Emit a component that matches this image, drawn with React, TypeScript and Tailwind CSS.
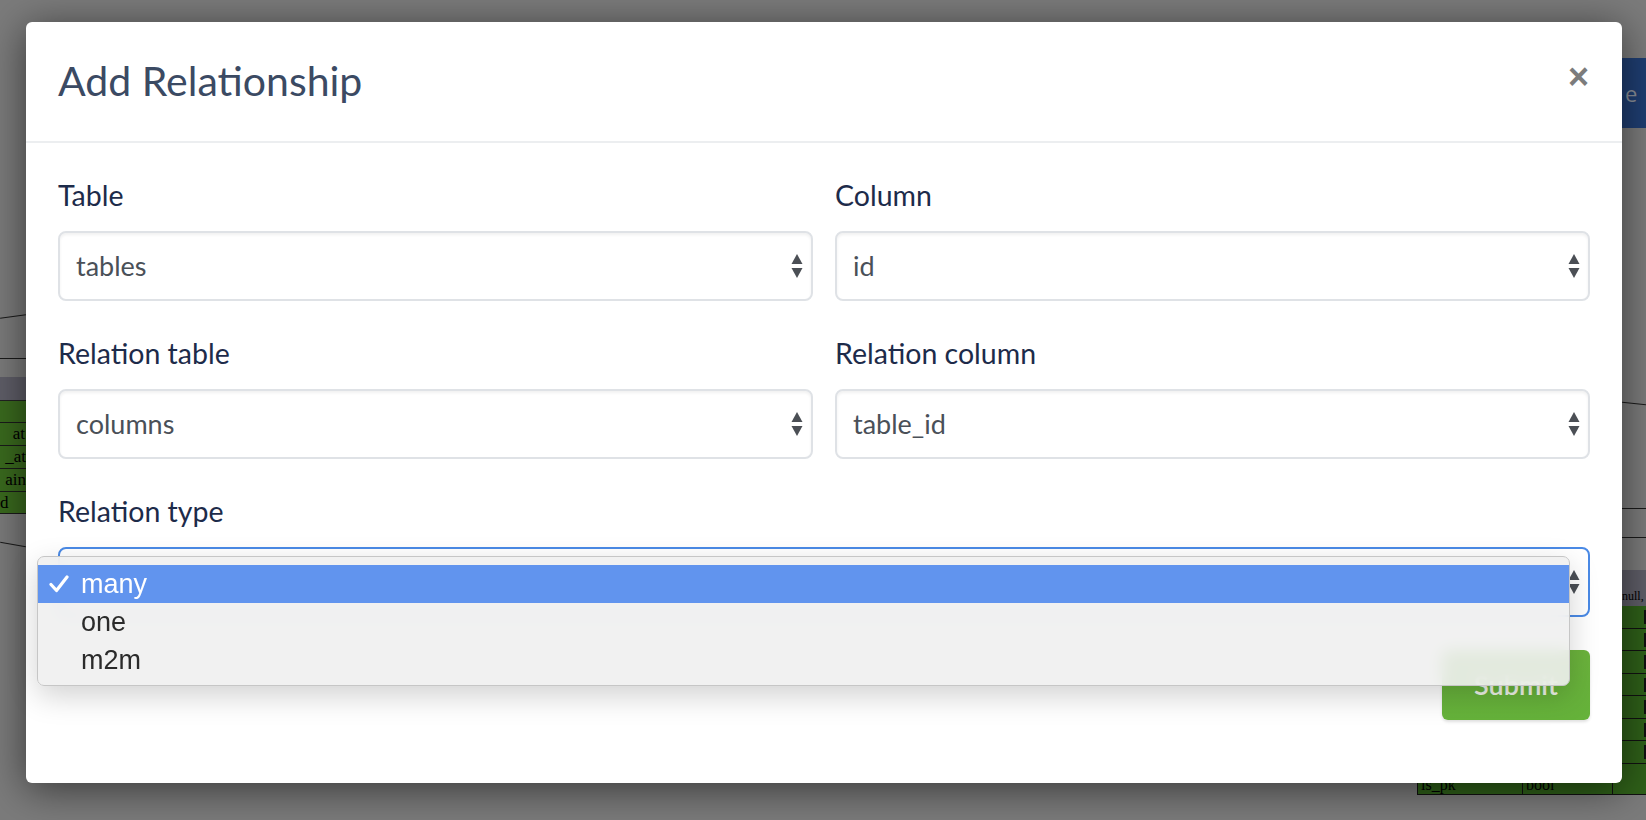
import React from "react";

const sans = "font-['Lato','Noto_Sans',sans-serif]";

function Arrows() {
  return (
    <svg width="12" height="26" viewBox="0 0 12 26" className="shrink-0">
      <path d="M6 1 L11.5 11 L0.5 11 Z" fill="#4b4f55" />
      <path d="M6 25 L11.5 15 L0.5 15 Z" fill="#4b4f55" />
    </svg>
  );
}

function SelectBox({ value, focused }: { value?: string; focused?: boolean }) {
  return (
    <div
      className={
        focused
          ? "h-[70px] rounded-[8px] border-2 border-[#4a8ae6] bg-white flex items-center justify-between pl-[16px] pr-[8px]"
          : "h-[70px] rounded-[8px] border-2 border-[#dfe2e6] bg-white shadow-[inset_0_2px_3px_rgba(0,0,0,0.06)] flex items-center justify-between pl-[16px] pr-[8px]"
      }
    >
      <span className="text-[27px] text-[#4a5058]">{value}</span>
      <Arrows />
    </div>
  );
}

function Field({ label, value, focused }: { label: string; value?: string; focused?: boolean }) {
  return (
    <div className="flex flex-col">
      <label className="text-[28.5px] leading-[32px] text-[#1d2b4a] mb-[20px]">{label}</label>
      <SelectBox value={value} focused={focused} />
    </div>
  );
}

function Background() {
  return (
    <>
      {/* left diagram fragment */}
      <div className="absolute left-0 top-[316px] w-[26px] h-[1px] bg-[#1a1a1a] -rotate-[8deg]" />
      <div className="absolute left-0 top-[358px] w-[26px] h-[1px] bg-[#1a1a1a]" />
      <div className="absolute left-0 top-[377px] w-[26px] h-[24px] bg-[#5f5e68] border-b border-[#222]" />
      <div className="absolute left-0 top-[401px] w-[26px] h-[113px] overflow-hidden flex flex-col bg-[#3a6a1e] font-['Liberation_Serif',serif] text-[17px] text-black leading-[22px]">
        <div className="h-[22px] shrink-0 border-b border-[#1a1a1a]" />
        <div className="h-[23px] shrink-0 border-b border-[#1a1a1a] text-right pr-[1px]">at</div>
        <div className="h-[23px] shrink-0 border-b border-[#1a1a1a] text-right">_at</div>
        <div className="h-[23px] shrink-0 border-b border-[#1a1a1a] text-right">ain</div>
        <div className="h-[22px] shrink-0 border-b border-[#1a1a1a]">d</div>
      </div>
      <div className="absolute left-0 top-[544px] w-[26px] h-[1px] bg-[#1a1a1a] rotate-[10deg]" />

      {/* right diagram fragment */}
      <div className="absolute left-[1600px] top-[58px] w-[46px] h-[70px] bg-[#1f3e72] flex items-center pl-[25px] text-[#8a8f99] text-[22px] font-['Open_Sans',sans-serif]">
        e
      </div>
      <div className="absolute left-[1622px] top-[403px] w-[24px] h-[1px] bg-[#1a1a1a] rotate-[6deg]" />
      <div className="absolute left-[1622px] top-[508px] w-[24px] h-[1px] bg-[#1a1a1a]" />
      <div className="absolute left-[1622px] top-[537px] w-[24px] h-[1px] bg-[#1a1a1a]" />
      <div className="absolute left-[1622px] top-[570px] w-[24px] h-[36px] bg-[#5f5e68] font-['Liberation_Serif',serif] text-[12px] text-black pt-[17px] leading-[18px] overflow-hidden">
        null,
      </div>
      <div className="absolute left-[1417px] top-[606px] w-[229px] h-[189px] overflow-hidden bg-[#2f6019] border-l border-b border-[#111] flex flex-col font-['Liberation_Serif',serif] text-[16px] text-black">
        {[0, 1, 2, 3, 4, 5, 6].map((i) => (
          <div key={i} className="h-[22.5px] shrink-0 border-b border-[#111] flex">
            <div className="w-[105px] border-r border-[#111]" />
            <div className="w-[90px] border-r border-[#111]" />
            <div className="flex-1 flex justify-end">
              <div className="w-[2px] h-[14px] bg-[#111] mt-[4px]" />
            </div>
          </div>
        ))}
        <div className="h-[30px] shrink-0 flex items-end leading-[18px]">
          <div className="w-[105px] h-full border-r border-[#111] pl-[3px] flex items-end">is_pk</div>
          <div className="w-[90px] h-full border-r border-[#111] pl-[3px] flex items-end">bool</div>
          <div className="flex-1" />
        </div>
      </div>
    </>
  );
}

export default function App() {
  return (
    <div className={`relative w-[1646px] h-[820px] overflow-hidden bg-[#7b7b7b] ${sans}`}>
      <Background />

      <div className="absolute left-[26px] top-[22px] w-[1596px] h-[761px] bg-white rounded-[6px] shadow-[0_6px_40px_rgba(0,0,0,0.55)]">
        <div className="h-[121px] border-b-2 border-[#eceef0] px-[32px] flex items-center justify-between">
          <h4 className="text-[41px] text-[#3b4a63] leading-none pb-[2px]">Add Relationship</h4>
          <span className="text-[36px] font-bold text-[#7c7c7c] leading-none pr-[1px] mb-[10px] font-['Liberation_Sans',sans-serif]">×</span>
        </div>

        <div className="px-[32px] pt-[36px]">
          <div className="grid grid-cols-2 gap-x-[22px] gap-y-[36px]">
            <Field label="Table" value="tables" />
            <Field label="Column" value="id" />
            <Field label="Relation table" value="columns" />
            <Field label="Relation column" value="table_id" />
            <div className="col-span-2">
              <Field label="Relation type" focused />
            </div>
          </div>
          <div className="flex justify-end mt-[33px]">
            <button className="w-[148px] h-[70px] rounded-[6px] bg-gradient-to-b from-[#6bb23c] to-[#65b23a] text-[#eef3e8] text-[27px] font-semibold shadow-[0_2px_3px_rgba(0,0,0,0.12)]">
              Submit
            </button>
          </div>
        </div>

        {/* open select list */}
        <div className="absolute left-[11px] top-[534px] w-[1533px] h-[130px] rounded-[7px] border border-[#c6c6c6] bg-[#f0f0f0]/90 backdrop-blur-sm shadow-[0_10px_30px_rgba(0,0,0,0.18)] py-[8px] font-['Liberation_Sans',sans-serif] text-[27px]">
          <div className="h-[38px] bg-[#6194ee] text-white flex items-center">
            <span className="w-[43px] pl-[11px] flex items-center">
              <svg width="20" height="18" viewBox="0 0 20 18">
                <path d="M2 9.5 L7.5 15.5 L18 2" fill="none" stroke="white" strokeWidth="3.2" strokeLinecap="round" strokeLinejoin="round" />
              </svg>
            </span>
            <span>many</span>
          </div>
          <div className="h-[38px] text-[#2b2b2b] flex items-center pl-[43px]">one</div>
          <div className="h-[38px] text-[#2b2b2b] flex items-center pl-[43px]">m2m</div>
        </div>
      </div>
    </div>
  );
}
